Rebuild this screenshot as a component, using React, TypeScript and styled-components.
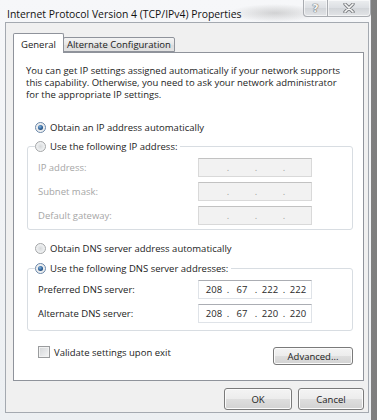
import React from "react";
import styled, { createGlobalStyle } from "styled-components";

const FONT = `"Open Sans", "Noto Sans", "Liberation Sans", sans-serif`;

const GlobalStyle = createGlobalStyle`
  html, body { margin: 0; padding: 0; }
  body {
    width: 377px;
    height: 420px;
    overflow: hidden;
    background: linear-gradient(90deg, #c9c9c9, #7e7e7e);
    font-family: ${FONT};
    font-size: 9.5px;
    color: #1c1c1c;
    white-space: nowrap;
  }
`;

const Screen = styled.div`
  display: flex;
  width: 377px;
  height: 420px;
`;

const Window = styled.div`
  box-sizing: border-box;
  width: 371px;
  height: 420px;
  flex: none;
  display: flex;
  flex-direction: column;
  padding: 0 2px 7px 5px;
  background:
    radial-gradient(45px 9px at 275px 13px, rgba(140, 140, 140, 0.35), transparent),
    linear-gradient(#f6f7f9, #eceff2);
`;

const TitleBar = styled.div`
  height: 22px;
  flex: none;
  display: flex;
  align-items: flex-start;
  justify-content: space-between;
  margin-right: -2px;
`;

const Title = styled.div`
  padding: 6px 0 0 2px;
  line-height: 16px;
  font-size: 10.4px;
  color: #111;
`;

const CaptionGroup = styled.div`
  display: flex;
`;

const CaptionButton = styled.div<{ $w: number; $first?: boolean; $last?: boolean }>`
  box-sizing: border-box;
  width: ${(p) => p.$w}px;
  height: 17px;
  display: flex;
  align-items: center;
  justify-content: center;
  border: 1px solid #a9acb1;
  border-top: none;
  border-left-width: ${(p) => (p.$first ? 1 : 0)}px;
  border-radius: ${(p) => (p.$first ? "0 0 0 4px" : p.$last ? "0 0 4px 0" : "0")};
  background: linear-gradient(#eceef0, #dcdfe3 50%, #d2d5d9 51%, #e2e4e7);
  box-shadow: inset 0 0 0 1px rgba(255, 255, 255, 0.6);
`;

const HelpGlyph = styled.span`
  font-family: "DejaVu Sans", sans-serif;
  font-weight: bold;
  font-size: 11px;
  line-height: 11px;
  color: #f4f4f4;
  text-shadow: 0 0 1px #6f6f6f, 0 0 1px #6f6f6f, 0 0 1px #6f6f6f;
`;

const Client = styled.div`
  flex: 1;
  min-height: 0;
  display: flex;
  flex-direction: column;
  background: #f0f0f0;
  border: 1px solid #a4a9b0;
  padding: 10px 4px 2px 7px;
`;

const TabStrip = styled.div`
  display: flex;
  align-items: flex-end;
  margin-bottom: -1px;
  position: relative;
  z-index: 1;
`;

const Tab = styled.div<{ $active?: boolean }>`
  box-sizing: border-box;
  height: ${(p) => (p.$active ? 20 : 15)}px;
  margin-bottom: ${(p) => (p.$active ? 0 : 1)}px;
  margin-left: ${(p) => (p.$active ? 0 : -1)}px;
  padding: ${(p) => (p.$active ? "3px 7px 0 7px" : "0 3px 0 3px")};
  display: flex;
  align-items: center;
  border: 1px solid #8f939b;
  border-bottom: ${(p) => (p.$active ? "none" : "1px solid #8f939b")};
  border-radius: 2px 2px 0 0;
  background: ${(p) => (p.$active ? "#ffffff" : "linear-gradient(#f4f4f4, #e6e6e6 50%, #dcdcdc 51%, #e2e2e2)")};
  line-height: 14px;
  color: #1a1a1a;
`;

const Panel = styled.div`
  flex: 1;
  min-height: 0;
  display: flex;
  flex-direction: column;
  background: #ffffff;
  border: 1px solid #8f939b;
  padding: 12px 0 0 12px;
`;

const Paragraph = styled.p`
  margin: 0;
  line-height: 12px;
  color: #1c1c1c;
`;

const RadioRow = styled.label<{ $mt?: number }>`
  display: flex;
  align-items: center;
  gap: 4px;
  height: 14px;
  margin-top: ${(p) => p.$mt ?? 0}px;
  padding-left: 9px;
  color: #1c1c1c;
`;

const Radio = styled.span<{ $checked?: boolean }>`
  box-sizing: border-box;
  width: 11px;
  height: 11px;
  border-radius: 50%;
  flex: none;
  display: flex;
  align-items: center;
  justify-content: center;
  border: 1px solid ${(p) => (p.$checked ? "#6a86a8" : "#a4a6a8")};
  background: radial-gradient(circle at 50% 50%, #d6d8da 0, #eef0f1 60%, #f9f9f9 100%);
  &::after {
    content: "";
    width: 5px;
    height: 5px;
    border-radius: 50%;
    display: ${(p) => (p.$checked ? "block" : "none")};
    background: radial-gradient(circle at 40% 35%, #7fb2e0 0, #2b5d93 55%, #17385f 100%);
  }
`;

const Group = styled.fieldset<{ $mt: number; $pb: number }>`
  margin: ${(p) => p.$mt}px 10px 0 1px;
  min-width: 0;
  padding: 5px 0 ${(p) => p.$pb}px 10px;
  border: 1px solid #d8dde2;
  border-radius: 3px;
  display: flex;
  flex-direction: column;
  gap: 5px;
`;

const Legend = styled.legend`
  display: flex;
  align-items: center;
  gap: 4px;
  height: 14px;
  margin-left: -3px;
  padding: 0 3px 0 0;
  color: #1c1c1c;
`;

const FieldRow = styled.div`
  display: grid;
  grid-template-columns: 160px 114px;
  align-items: center;
`;

const FieldLabel = styled.span<{ $disabled?: boolean }>`
  color: ${(p) => (p.$disabled ? "#a6a6a6" : "#1c1c1c")};
`;

const IpBox = styled.div<{ $disabled?: boolean }>`
  box-sizing: border-box;
  height: 19px;
  width: 114px;
  display: grid;
  grid-template-columns: 24px 4px 24px 4px 24px 4px 24px;
  align-items: center;
  padding-left: 3px;
  border: 1px solid ${(p) => (p.$disabled ? "#d9d9d9" : "#dfe3e8")};
  border-top-color: ${(p) => (p.$disabled ? "#c2c2c2" : "#abadb3")};
  background: ${(p) => (p.$disabled ? "#f2f2f2" : "#ffffff")};
  color: ${(p) => (p.$disabled ? "#a0a0a0" : "#2a2a2a")};
  line-height: 14px;
`;

const Octet = styled.span`
  text-align: center;
`;

const Dot = styled.span`
  text-align: center;
`;

const BottomRow = styled.div`
  display: flex;
  justify-content: space-between;
  align-items: flex-start;
  margin: 15px 10px 0 0;
`;

const CheckRow = styled.label`
  display: flex;
  align-items: center;
  gap: 4px;
  height: 12px;
  margin-left: 12px;
  color: #1c1c1c;
`;

const CheckBox = styled.span`
  box-sizing: border-box;
  width: 12px;
  height: 12px;
  flex: none;
  border: 1px solid #9a9c9e;
  background: linear-gradient(135deg, #d3d5d7, #f4f5f6);
  box-shadow: inset 0 0 0 1px #f2f2f2;
`;

const Button = styled.button<{ $w: number; $h: number; $mt?: number }>`
  box-sizing: border-box;
  width: ${(p) => p.$w}px;
  height: ${(p) => p.$h}px;
  margin-top: ${(p) => p.$mt ?? 0}px;
  padding: 0;
  font-family: ${FONT};
  font-size: 9.5px;
  color: #1c1c1c;
  border: 1px solid #7a7a7a;
  border-radius: 3px;
  background: linear-gradient(#f4f4f4, #ececec 50%, #dedede 51%, #d2d2d2);
  box-shadow: inset 0 0 0 1px #fbfbfb;
`;

const Footer = styled.div`
  flex: none;
  display: flex;
  justify-content: flex-end;
  gap: 6px;
  margin-top: 7px;
`;

const CloseGlyph = () => (
  <svg width="12" height="10" viewBox="0 0 12 10">
    <path d="M2 1 L10 9 M10 1 L2 9" stroke="#7c7f83" strokeWidth="3.4" strokeLinecap="round" />
    <path d="M2 1 L10 9 M10 1 L2 9" stroke="#f6f6f6" strokeWidth="1.6" strokeLinecap="round" />
  </svg>
);

const IpField = ({ values, disabled }: { values: string[]; disabled?: boolean }) => (
  <IpBox $disabled={disabled}>
    <Octet>{values[0]}</Octet>
    <Dot>.</Dot>
    <Octet>{values[1]}</Octet>
    <Dot>.</Dot>
    <Octet>{values[2]}</Octet>
    <Dot>.</Dot>
    <Octet>{values[3]}</Octet>
  </IpBox>
);

export default function App() {
  const empty = ["", "", "", ""];
  return (
    <>
      <GlobalStyle />
      <Screen>
        <Window>
          <TitleBar>
            <Title>Internet Protocol Version 4 (TCP/IPv4) Properties</Title>
            <CaptionGroup>
              <CaptionButton $w={25} $first>
                <HelpGlyph>?</HelpGlyph>
              </CaptionButton>
              <CaptionButton $w={43} $last>
                <CloseGlyph />
              </CaptionButton>
            </CaptionGroup>
          </TitleBar>
          <Client>
            <TabStrip>
              <Tab $active>General</Tab>
              <Tab>Alternate Configuration</Tab>
            </TabStrip>
            <Panel>
              <Paragraph>
                You can get IP settings assigned automatically if your network supports
                <br />
                this capability. Otherwise, you need to ask your network administrator
                <br />
                for the appropriate IP settings.
              </Paragraph>
              <RadioRow $mt={19}>
                <Radio $checked />
                Obtain an IP address automatically
              </RadioRow>
              <Group $mt={5} $pb={4}>
                <Legend>
                  <Radio />
                  Use the following IP address:
                </Legend>
                <FieldRow>
                  <FieldLabel $disabled>IP address:</FieldLabel>
                  <IpField values={empty} disabled />
                </FieldRow>
                <FieldRow>
                  <FieldLabel $disabled>Subnet mask:</FieldLabel>
                  <IpField values={empty} disabled />
                </FieldRow>
                <FieldRow>
                  <FieldLabel $disabled>Default gateway:</FieldLabel>
                  <IpField values={empty} disabled />
                </FieldRow>
              </Group>
              <RadioRow $mt={11}>
                <Radio />
                Obtain DNS server address automatically
              </RadioRow>
              <Group $mt={6} $pb={7}>
                <Legend>
                  <Radio $checked />
                  Use the following DNS server addresses:
                </Legend>
                <FieldRow>
                  <FieldLabel>Preferred DNS server:</FieldLabel>
                  <IpField values={["208", "67", "222", "222"]} />
                </FieldRow>
                <FieldRow>
                  <FieldLabel>Alternate DNS server:</FieldLabel>
                  <IpField values={["208", "67", "220", "220"]} />
                </FieldRow>
              </Group>
              <BottomRow>
                <CheckRow>
                  <CheckBox />
                  Validate settings upon exit
                </CheckRow>
                <Button $w={80} $h={18} $mt={1}>Advanced...</Button>
              </BottomRow>
            </Panel>
            <Footer>
              <Button $w={68} $h={22}>OK</Button>
              <Button $w={66} $h={22}>Cancel</Button>
            </Footer>
          </Client>
        </Window>
      </Screen>
    </>
  );
}
